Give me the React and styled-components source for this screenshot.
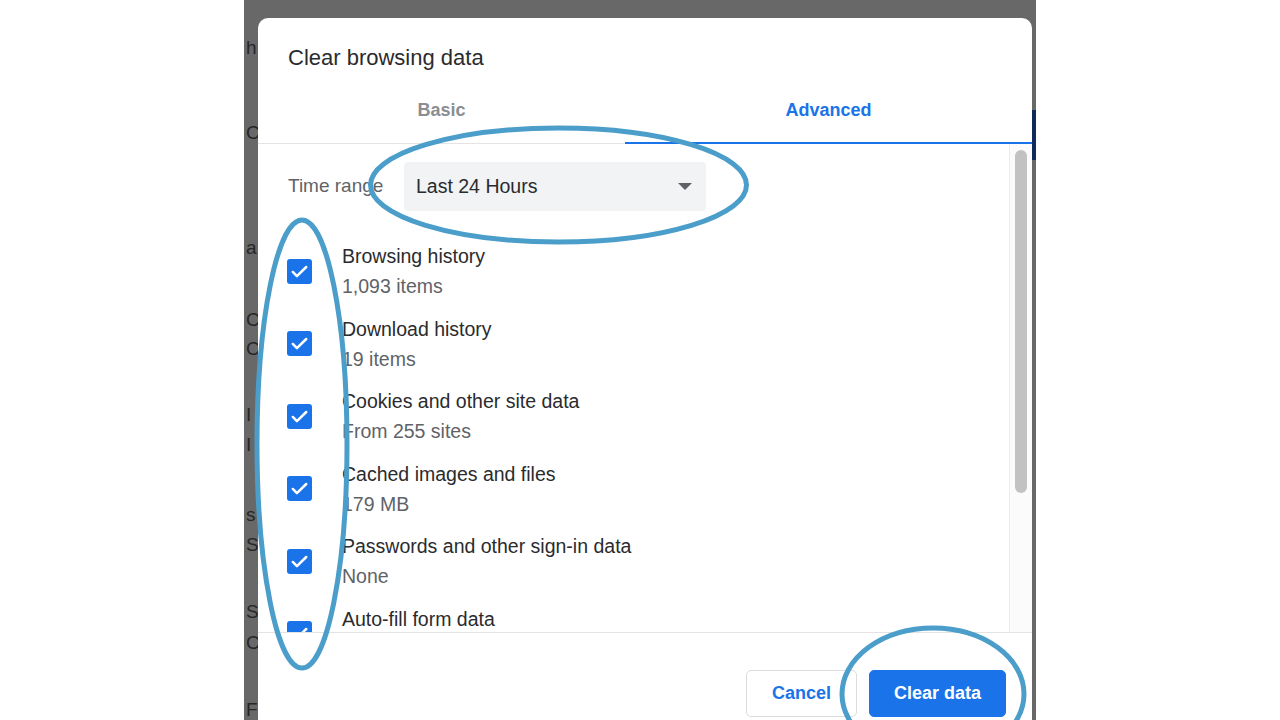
import React from 'react';
import styled, { createGlobalStyle } from 'styled-components';

const GlobalStyle = createGlobalStyle`
  html, body {
    margin: 0;
    padding: 0;
    background: #fff;
  }
  body {
    font-family: "Liberation Sans", Arial, sans-serif;
  }
`;

const Page = styled.div`
  position: relative;
  width: 1280px;
  height: 720px;
  display: flex;
  overflow: hidden;
  background: #fff;
`;

const Stage = styled.div`
  position: relative;
  margin-left: 244px;
  width: 792px;
  height: 720px;
  background: #686868;
  overflow: hidden;
  display: flex;
`;

// page behind the modal, only a sliver shows
const BgColumn = styled.div`
  display: flex;
  flex-direction: column;
  width: 40px;
`;

const BgLetter = styled.div`
  margin-top: ${p => p.$top}px;
  height: 24px;
  line-height: 24px;
  padding-left: 2px;
  font-size: 19px;
  color: #262626;
`;

const BgRight = styled.div`
  margin-left: auto;
  width: 4px;
  display: flex;
  flex-direction: column;
`;

const BgBlock = styled.div`
  margin-top: 110px;
  height: 50px;
  background: #0e2b5c;
`;

const Dialog = styled.div`
  position: absolute;
  left: 14px;
  top: 18px;
  width: 774px;
  background: #fff;
  border-radius: 10px 10px 0 0;
  display: flex;
  flex-direction: column;
`;

const Title = styled.h1`
  margin: 0;
  padding: 28px 30px 20px;
  font-size: 22px;
  line-height: 24px;
  font-weight: 400;
  color: #2a2b2e;
`;

const TabRow = styled.div`
  display: flex;
  height: 54px;
  border-bottom: 1px solid #e3e3e3;
  box-sizing: border-box;
`;

const Tab = styled.div`
  ${p => (p.$w ? `width: ${p.$w}px;` : 'flex: 1;')}
  padding-top: 8px;
  text-align: center;
  font-size: 18px;
  line-height: 24px;
  font-weight: 700;
  color: ${p => (p.$active ? '#1a73e8' : '#8a8d91')};
  box-shadow: ${p => (p.$active ? 'inset 0 -2px 0 #1a73e8' : 'none')};
  margin-bottom: -1px;
`;

const Body = styled.div`
  display: flex;
  height: 488px;
`;

const Scroll = styled.div`
  flex: 1;
  overflow: hidden;
  padding: 18px 0 0 30px;
`;

const Track = styled.div`
  width: 23px;
  border-left: 1px solid #ececec;
  box-sizing: border-box;
  background: #fbfbfb;
  padding: 6px 0 0 5px;
`;

const Thumb = styled.div`
  width: 12px;
  height: 343px;
  border-radius: 6px;
  background: #c2c2c2;
`;

const TimeRow = styled.div`
  display: flex;
  align-items: center;
`;

const TimeLabel = styled.div`
  width: 116px;
  margin-top: -2px;
  font-size: 19px;
  color: #5f6368;
`;

const Select = styled.div`
  width: 302px;
  height: 49px;
  box-sizing: border-box;
  padding: 0 14px 0 12px;
  border-radius: 4px;
  background: #f1f3f4;
  display: flex;
  align-items: center;
  justify-content: space-between;
  font-size: 19.5px;
  color: #2a2b2e;
`;

const ItemList = styled.div`
  margin-top: 30px;
  display: flex;
  flex-direction: column;
  gap: 12.5px;
`;

const Item = styled.div`
  display: flex;
  align-items: center;
`;

const Check = styled.div`
  width: 25px;
  height: 25px;
  margin-left: -1px;
  margin-right: 30px;
  flex-shrink: 0;
  border-radius: 3px;
  background: #1a73e8;
  display: flex;
  align-items: center;
  justify-content: center;
`;

const ItemText = styled.div`
  height: 30px;
  font-size: 19.5px;
  line-height: 30px;
  color: ${p => (p.$sub ? '#5f6368' : '#2a2b2e')};
`;

const Footer = styled.div`
  border-top: 1px solid #e3e3e3;
  padding: 37px 26px 20px;
  display: flex;
  justify-content: flex-end;
  gap: 12px;
`;

const Button = styled.button`
  width: ${p => p.$w}px;
  height: 47px;
  border-radius: 5px;
  border: 1px solid ${p => (p.$primary ? '#1a73e8' : '#dadce0')};
  background: ${p => (p.$primary ? '#1a73e8' : '#fff')};
  color: ${p => (p.$primary ? '#fff' : '#1a73e8')};
  font-family: "Liberation Sans", Arial, sans-serif;
  font-size: 18px;
  font-weight: 700;
  padding: 0;
`;

const Marks = styled.svg`
  position: absolute;
  left: 0;
  top: 0;
  pointer-events: none;
`;

const bgLetters = [
  [36, 'h'], [61, 'C'], [91, 'a'], [48, 'C'], [5, 'C'], [42, 'I'], [6, 'I'],
  [46, 's'], [6, 'S'], [43, 'S'], [7, 'C'], [43, 'F'],
];

const items = [
  ['Browsing history', '1,093 items'],
  ['Download history', '19 items'],
  ['Cookies and other site data', 'From 255 sites'],
  ['Cached images and files', '179 MB'],
  ['Passwords and other sign-in data', 'None'],
  ['Auto-fill form data', ''],
];

function CheckIcon() {
  return (
    <svg width="23" height="23" viewBox="0 0 24 24">
      <path d="M5 12.5l4.3 4.3L19 7.3" fill="none" stroke="#fff" strokeWidth="2.6" strokeLinecap="round" strokeLinejoin="round" />
    </svg>
  );
}

function App() {
  return (
    <Page>
      <GlobalStyle />
      <Stage>
        <BgColumn>
          {bgLetters.map(([top, t], i) => (
            <BgLetter key={i} $top={top}>{t}</BgLetter>
          ))}
        </BgColumn>
        <BgRight>
          <BgBlock />
        </BgRight>

        <Dialog>
          <Title>Clear browsing data</Title>
          <TabRow>
            <Tab $w={367}>Basic</Tab>
            <Tab $active>Advanced</Tab>
          </TabRow>
          <Body>
            <Scroll>
              <TimeRow>
                <TimeLabel>Time range</TimeLabel>
                <Select>
                  <span>Last 24 Hours</span>
                  <svg width="14" height="8" viewBox="0 0 14 8">
                    <path d="M0 0h14L7 7z" fill="#5f6368" />
                  </svg>
                </Select>
              </TimeRow>
              <ItemList>
                {items.map(([title, sub]) => (
                  <Item key={title}>
                    <Check><CheckIcon /></Check>
                    <div>
                      <ItemText>{title}</ItemText>
                      <ItemText $sub>{sub}</ItemText>
                    </div>
                  </Item>
                ))}
              </ItemList>
            </Scroll>
            <Track>
              <Thumb />
            </Track>
          </Body>
          <Footer>
            <Button $w={111}>Cancel</Button>
            <Button $w={137} $primary>Clear data</Button>
          </Footer>
        </Dialog>
      </Stage>

      <Marks width="1280" height="720" viewBox="0 0 1280 720">
        <g fill="none" stroke="#4b9dca" strokeWidth="5">
          <ellipse cx="558.5" cy="185" rx="188" ry="57" />
          <ellipse cx="302" cy="444" rx="45" ry="224" />
          <ellipse cx="933" cy="694" rx="91" ry="66" />
        </g>
      </Marks>
    </Page>
  );
}

export default App;
